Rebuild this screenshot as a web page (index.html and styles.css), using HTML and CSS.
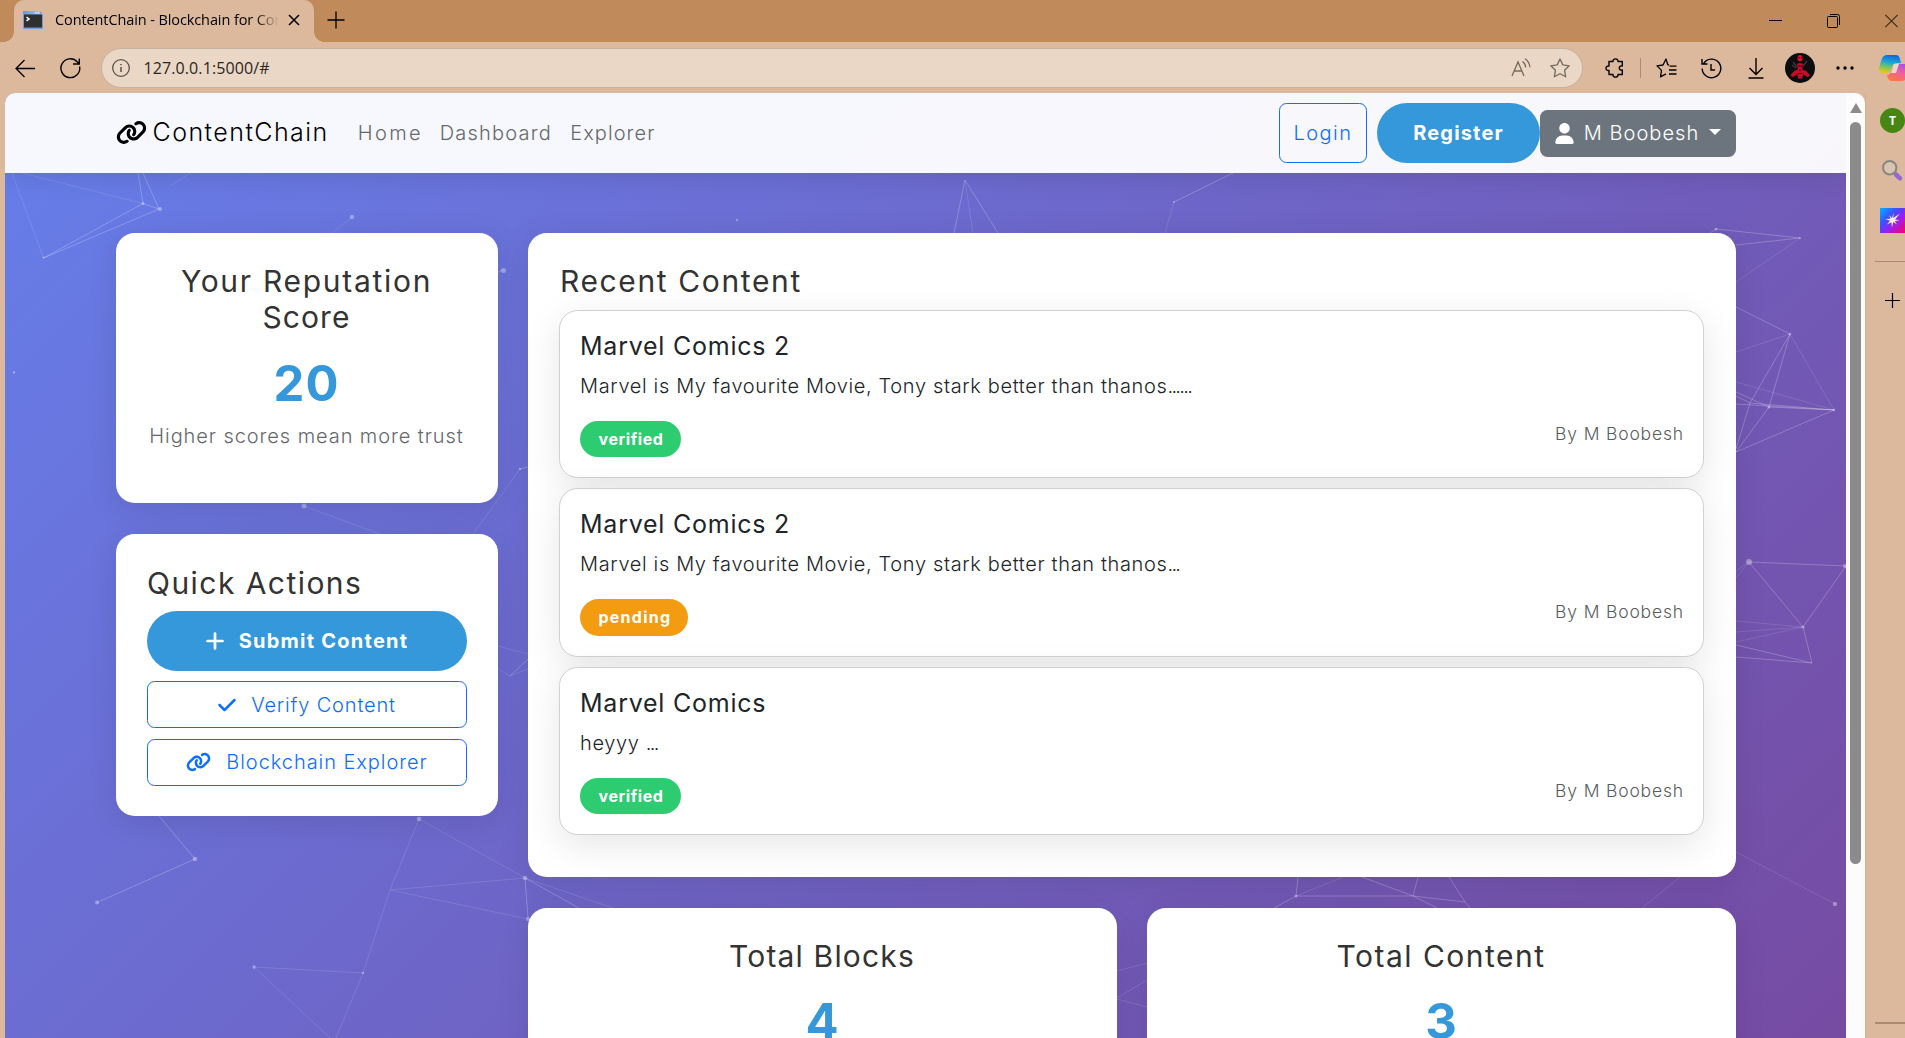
FILE: index.html
```html
<!DOCTYPE html>
<html lang="en">
<head>
<meta charset="utf-8">
<title>ContentChain - Blockchain for Content</title>
<link rel="stylesheet" href="styles.css">
</head>
<body>
<svg class="defs" aria-hidden="true">
  <symbol id="i-link" viewBox="0 0 640 512"><path fill="currentColor" d="M579.8 267.7c56.5-56.5 56.5-148 0-204.5c-50-50-128.8-56.5-186.3-15.4l-1.6 1.1c-14.4 10.3-17.7 30.3-7.4 44.6s30.3 17.7 44.6 7.4l1.6-1.1c32.1-22.9 76-19.3 103.8 8.6c31.5 31.5 31.5 82.5 0 114L422.3 334.8c-31.5 31.5-82.5 31.5-114 0c-27.9-27.9-31.5-71.8-8.6-103.8l1.1-1.6c10.3-14.4 6.9-34.4-7.4-44.6s-34.4-6.9-44.6 7.4l-1.1 1.6C206.5 251.2 213 330 263 380c56.5 56.5 148 56.5 204.5 0L579.8 267.7zM60.2 244.3c-56.5 56.5-56.5 148 0 204.5c50 50 128.8 56.5 186.3 15.4l1.6-1.1c14.4-10.3 17.7-30.3 7.4-44.6s-30.3-17.7-44.6-7.4l-1.6 1.1c-32.1 22.9-76 19.3-103.8-8.6C74 372 74 321 105.5 289.5L217.7 177.2c31.5-31.5 82.5-31.5 114 0c27.9 27.9 31.5 71.8 8.6 103.9l-1.1 1.6c-10.3 14.4-6.9 34.4 7.4 44.6s34.4 6.9 44.6-7.4l1.1-1.6C433.5 260.8 427 182 377 132c-56.5-56.5-148-56.5-204.5 0L60.2 244.3z"/></symbol>
</svg>

<header class="tabstrip">
  <div class="tab">
    <svg class="favicon" viewBox="0 0 20 18"><defs><linearGradient id="tbar" x1="0" y1="0" x2="1" y2="0"><stop offset="0" stop-color="#5b9be8"/><stop offset="1" stop-color="#a9c8ee"/></linearGradient></defs><rect width="20" height="18" rx="1" fill="#6a9de0"/><rect width="20" height="3.5" fill="url(#tbar)"/><path d="M12 1.8h1.5M14.5 1.8H16" stroke="#fff"/><path d="M17 1.8h1.6" stroke="#e04a3a"/><rect x="1" y="3.5" width="18" height="13" fill="#2d2f31"/><path d="M3.5 6.2 6 8 3.5 9.8" fill="none" stroke="#fff" stroke-width="1.5"/></svg>
    <span class="tab-title">ContentChain - Blockchain for Con</span>
    <svg class="tab-close" viewBox="0 0 12 12"><path d="M1 1l10 10M11 1 1 11" stroke="#000" stroke-width="1.5"/></svg>
  </div>
  <svg class="new-tab" viewBox="0 0 18 18"><path d="M9 .5v17M.5 9h17" stroke="#000" stroke-width="1.3"/></svg>
  <div class="window-controls">
    <svg width="13" height="14" viewBox="0 0 13 14"><path d="M0 6.5h13" stroke="#000"/></svg>
    <svg width="13" height="14" viewBox="0 0 13 14" fill="none" stroke="#000"><rect x=".5" y="2.5" width="10" height="11" rx="1"/><path d="M3 .5h7.500a2 2 0 0 1 2 2V11" /></svg>
    <svg width="13" height="14" viewBox="0 0 13 14"><path d="M.3 .8l12.400 12.400M12.700 .8.3 13.200" stroke="#3a2a1c" stroke-width="1.100"/></svg>
  </div>
</header>

<div class="toolbar">
  <svg class="back" viewBox="0 0 20 19" fill="none" stroke="#000" stroke-width="1.300"><path d="M20 9.500H1M9.500 1 1 9.500l8.500 8.500"/></svg>
  <svg class="reload" viewBox="0 0 21 21" fill="none" stroke="#000" stroke-width="1.400"><path d="M19.600 8.500A9.400 9.400 0 1 1 17.400 4L19 5.500M13 6h6.300V.5"/></svg>
  <div class="address">
    <svg class="info" viewBox="0 0 18 18" fill="none" stroke="#5a524a" stroke-width="1.300"><circle cx="9" cy="9" r="8.300"/><path d="M9 8v5M9 5v1.300" stroke-width="1.500"/></svg>
    <span class="url">127.0.0.1:5000/#</span>
    <svg class="read" viewBox="0 0 20 20" fill="none" stroke="#75695f" stroke-width="1.300"><path d="M1 18 7 4l6 14M3 13h8M11.500 3.500q3 2 3.300 6M14 .8q4.500 3 5 8.500"/></svg>
    <svg class="star" viewBox="0 0 20 20" fill="none" stroke="#75695f" stroke-width="1.300" stroke-linejoin="round"><path d="M10 1l2.800 5.900 6.400.9-4.600 4.500 1.100 6.500L10 15.700l-5.700 3.100 1.100-6.500L.8 7.800l6.400-.9z"/></svg>
  </div>
  <svg class="puzzle" viewBox="0 0 20 20" fill="none" stroke="#000" stroke-width="1.400"><path d="M4 3.500h4C7.500 0 13.500 0 13 3.500h4.300V8c-4-1-4 5 0 4v4.500H13c.5 3.500-5.500 3.500-5 0H4V12.500C0 13 0 7.500 4 8z" stroke-linejoin="round"/></svg>
  <span class="divider"></span>
  <svg class="favs" viewBox="0 0 21 20" fill="none" stroke="#000" stroke-width="1.300" stroke-linejoin="round"><path d="M13 7.200 11.800 6.700 10 1 7 7l-6 .9 4.500 4.500-1 6.500 5.500-3M13.500 8.200H20.500M13 12H20.500M13 16H20.500"/></svg>
  <svg class="history" viewBox="0 0 21 21" fill="none" stroke="#000" stroke-width="1.400"><path d="M2.600 5.500A9.300 9.300 0 1 1 1.200 10.500M1 1v5h5.500M10 6v6h4"/></svg>
  <svg class="download" viewBox="0 0 16 21" fill="none" stroke="#000" stroke-width="1.400"><path d="M8 0v16M1.500 10 8 16.500 14.500 10M.5 20h15"/></svg>
  <svg class="avatar" viewBox="0 0 30 30"><circle cx="15" cy="15" r="15" fill="#0c0d0e"/><path d="M8 9l4 5M22 8l-4 5M7 12l4 3" stroke="#34363a" stroke-width="1.500"/><ellipse cx="15" cy="5.300" rx="2.500" ry="3.200" fill="#e0102a"/><path d="M12 11q3-2 6 0l-.8 5.500 4 1.500 3.500 4q0 2-2.500 2l-4-3-1 4.500h-4l-1-4.500-4 3q-2.500 0-2.500-2l3.500-4 3.500-1.500z" fill="#cc0a28"/><path d="M13 4.800h1.300M15.800 4.800H17M12.500 13h5M14 17h2M13 20.500h4" stroke="#2c0610" stroke-width="1.100"/></svg>
  <svg class="more" viewBox="0 0 18 4"><circle cx="2" cy="2" r="1.700"/><circle cx="9" cy="2" r="1.700"/><circle cx="16" cy="2" r="1.700"/></svg>
  <svg class="copilot" viewBox="0 0 30 26"><defs><linearGradient id="ca" x1=".5" y1="0" x2=".3" y2="1"><stop offset="0" stop-color="#1268d8"/><stop offset=".35" stop-color="#18a0dc"/><stop offset=".65" stop-color="#6cc56a"/><stop offset="1" stop-color="#f6c50e"/></linearGradient><linearGradient id="cb" x1=".8" y1="0" x2=".3" y2="1"><stop offset="0" stop-color="#a84ce8"/><stop offset=".5" stop-color="#f2609a"/><stop offset="1" stop-color="#fa7a3c"/></linearGradient></defs><path d="M8 0h9q3 0 4 4l1 4h-4q-4 0-5.500 5L11.500 16q-1 2-4 2H4q-4 0-4-4Q1 8 3 3.500 4.500 0 8 0z" fill="url(#ca)"/><path d="M19 9h7q4 0 4 4-1 7-3 11-1.500 2-5 2h-9q-4 0-5-6 3 0 4.500-4l2-5q1-2 2.500-2z" fill="url(#cb)"/><path d="M15 9h5l-3 9h-5z" fill="#ead8c8"/></svg>
</div>

<div class="workspace">
  <div class="page">
    <svg class="particles" viewBox="5 93 1841 945" aria-hidden="true">
      <g class="faint"><path d="M22 173 143 203.500M43.500 258 12 173M170 186l20-13M304 506l76 28M473 534l47-65M419 819l106 59-135 12 138 29M525 878l88 30M363 973 254 967l76 71M419 819 390 890 363 973 336 1038M973 233 965 180M1174 202l-9 31M1790 334l44 76M1736 382l98 28M1736 352l54-18M1800 238l-64 44M1736 852l99 52M1680 877l-38 31M1296 896l47-19M1117 971l30-8M1117 998l30-18M1117 999l30 8M1803 627l-67-6M1803 627l-67 5M1803 627l-67 15M1749 562l-13 9M1749 562l-13 16M498 646l30 8M332 233l20-16M498 669l12 7 18-7"/></g>
      <g class="clear"><path d="M143 203.500 43.500 258 159 209M143 203.500 138 173M159 209l-16-36M159 816l36 43-98 43.500M525 878l3 40M525 878l54 30M510 676l18-17M520 469l8-2M498 272l5-2M954 233l11-53 33 53M1174 202l59-29M1710 233l6-4 84 9-64 7M1736 307l54 27-40 69-14 46M1790 334l-21 73-33 45 98-42-84-7-14-7M1736 392l33 15 65 3M1736 404l98 6M1749 562l97 4-43 61-54-65M1803 627l9 36-76-18M1812 663l-76-6M1298 877l-2 19-22 12M1296 896h117l5-19M1362 877l51 19 52 6-16-25M1465 902l5 6M1413 896l24 12M143 203.500l16 5.500"/></g>
      <g class="dots"><circle cx="143" cy="203.500" r="1.500"/><circle cx="160" cy="209" r="2"/><circle cx="43.500" cy="257.500" r="1"/><circle cx="352" cy="217" r="2.200"/><circle cx="503.500" cy="270.500" r="2.500"/><circle cx="304" cy="506" r="2.500"/><circle cx="520" cy="469" r="1.200"/><circle cx="14" cy="372.500" r="1.200"/><circle cx="195" cy="859" r="2.300"/><circle cx="97" cy="902.500" r="2"/><circle cx="419" cy="819" r="2.300"/><circle cx="525" cy="878" r="2.300"/><circle cx="528" cy="919" r="2"/><circle cx="254" cy="967" r="1.700"/><circle cx="363" cy="973" r="1.200"/><circle cx="737" cy="220" r="1.200"/><circle cx="1174" cy="202" r="1"/><circle cx="1716" cy="229" r="1.500"/><circle cx="1800" cy="238" r="1"/><circle cx="1790" cy="334" r="1.300"/><circle cx="1769" cy="407" r="1.500"/><circle cx="1834" cy="410" r="1.200"/><circle cx="1749" cy="562" r="3"/><circle cx="1845" cy="566" r="2"/><circle cx="1803" cy="627" r="1.500"/><circle cx="1835" cy="904" r="2.300"/><circle cx="1296" cy="896" r="1.500"/></g>
    </svg>

    <nav class="navbar">
      <a class="brand"><svg class="brand-icon"><use href="#i-link"/></svg><span>ContentChain</span></a>
      <div class="nav-links"><a class="home">Home</a><a class="dash">Dashboard</a><a class="expl">Explorer</a></div>
      <div class="nav-actions">
        <a class="btn outline login">Login</a>
        <a class="btn primary register">Register</a>
        <a class="btn user"><svg class="user-icon" viewBox="0 0 448 512"><path fill="#fff" d="M224 256c70.700 0 128-57.300 128-128S294.700 0 224 0 96 57.300 96 128s57.300 128 128 128zM274.700 304H173.300C77.600 304 0 381.600 0 477.300 0 496.500 15.500 512 34.700 512h378.700c19.100 0 34.600-15.500 34.600-34.700C448 381.600 370.400 304 274.700 304z"/></svg><span>M Boobesh</span><i class="caret"></i></a>
      </div>
    </nav>

    <main class="dashboard">
      <aside class="side">
        <section class="card score-card">
          <h4><span class="t-your">Your Reputation</span> <span class="t-score">Score</span></h4>
          <div class="figure">20</div>
          <p class="hint">Higher scores mean more trust</p>
        </section>
        <section class="card actions">
          <h4 class="t-quick">Quick Actions</h4>
          <a class="btn primary submit"><svg width="18" height="20" viewBox="0 0 18 20"><path d="M9 2.500v15M1.500 10h15" stroke="#fff" stroke-width="2.700" stroke-linecap="round"/></svg><span>Submit Content</span></a>
          <a class="btn outline verify"><svg width="18" height="20" viewBox="0 0 448 512"><path fill="currentColor" d="M438.600 105.400c12.500 12.500 12.500 32.800 0 45.300l-256 256c-12.500 12.500-32.800 12.500-45.300 0l-128-128c-12.500-12.500-12.500-32.800 0-45.300s32.800-12.500 45.300 0L160 338.700 393.400 105.400c12.500-12.500 32.800-12.500 45.300 0z"/></svg><span>Verify Content</span></a>
          <a class="btn outline chain"><svg width="25" height="20"><use href="#i-link"/></svg><span>Blockchain Explorer</span></a>
        </section>
      </aside>
      <div class="content">
        <section class="card recent">
          <h4 class="t-recent">Recent Content</h4>
          <article class="item">
            <h5>Marvel Comics 2</h5>
            <p>Marvel is My favourite Movie, Tony stark better than thanos<span class="ellipsis">......</span></p>
            <div class="meta"><span class="badge verified">verified</span><small>By M Boobesh</small></div>
          </article>
          <article class="item">
            <h5>Marvel Comics 2</h5>
            <p>Marvel is My favourite Movie, Tony stark better than thanos<span class="ellipsis">...</span></p>
            <div class="meta"><span class="badge pending">pending</span><small>By M Boobesh</small></div>
          </article>
          <article class="item">
            <h5>Marvel Comics</h5>
            <p>heyyy <span class="ellipsis">...</span></p>
            <div class="meta"><span class="badge verified">verified</span><small>By M Boobesh</small></div>
          </article>
        </section>
        <div class="stats">
          <section class="card stat"><h4 class="t-blocks">Total Blocks</h4><div class="figure">4</div></section>
          <section class="card stat"><h4 class="t-total">Total Content</h4><div class="figure">3</div></section>
        </div>
      </div>
    </main>
  </div>
  <div class="scrollbar"><i class="arrow"></i><i class="thumb"></i></div>
  <aside class="edge-bar">
    <span class="profile">T</span>
    <svg class="search" viewBox="0 0 20 20"><path d="M14 14.500 18 18.300" stroke="#9468d4" stroke-width="4.500" stroke-linecap="round"/><circle cx="7.700" cy="7.700" r="6.700" fill="#d9c4b2" stroke="#8a8580" stroke-width="2"/></svg>
    <svg class="designer" viewBox="0 0 25 25"><defs><linearGradient id="dg" x1="0" y1="0" x2="1" y2="1"><stop offset="0" stop-color="#00b4ff"/><stop offset=".35" stop-color="#3a50ff"/><stop offset=".6" stop-color="#9a20f0"/><stop offset="1" stop-color="#ff0060"/></linearGradient></defs><rect width="25" height="25" fill="url(#dg)"/><path d="M13.500 4.500l-.3 5.500L20 5.500l-5 6 4.500.8-4.700.9 2.200 3.300-3.700-2.500L12 19.500l-.7-5.200L7 16.500l3-3.700-5-1.800 5.500-.3L9 7l3 3z" fill="#f4eee6"/></svg>
    <hr>
    <svg class="add" viewBox="0 0 15 15"><path d="M7.500 0v15M0 7.500h15" stroke="#000" stroke-width="1.200"/></svg>
    <hr class="last">
  </aside>
</div>
</body>
</html>
```
FILE: styles.css
```css
* { box-sizing: border-box; }
body {
  margin: 0;
  width: 1905px;
  height: 1038px;
  overflow: hidden;
  display: flex;
  flex-direction: column;
  background: #dcb99d;
  font-family: "Inter", sans-serif;
  font-size: 20px;
  font-weight: 300;
  line-height: 30px;
}
svg { display: block; flex: none; overflow: visible; }
h4, h5, p { margin: 0; }
.defs { position: absolute; width: 0; height: 0; }

/* Tab strip */
.tabstrip {
  flex: none;
  height: 42px;
  background: #c18a5a;
  display: flex;
  align-items: center;
  padding-left: 14px;
}
.tab {
  position: relative;
  width: 300px;
  height: 42px;
  padding: 0 14px 2px 9px;
  background: #dcb99d;
  border-radius: 10px 10px 0 0;
  display: flex;
  align-items: center;
}
.tab::before, .tab::after {
  content: "";
  position: absolute;
  bottom: 0;
  width: 10px;
  height: 10px;
}
.tab::before { left: -10px; background: radial-gradient(circle at 0 0, transparent 9.500px, #dcb99d 10px); }
.tab::after { right: -10px; background: radial-gradient(circle at 100% 0, transparent 9.500px, #dcb99d 10px); }
.favicon { width: 20px; height: 18px; }
.tab-title {
  margin-left: 12px;
  width: 224px;
  overflow: hidden;
  white-space: nowrap;
  font: 400 14.500px/20px "Open Sans", sans-serif;
  letter-spacing: -.1px;
  color: #000;
  -webkit-mask-image: linear-gradient(90deg, #000 200px, transparent 224px);
  mask-image: linear-gradient(90deg, #000 200px, transparent 224px);
}
.tab-close { width: 12px; height: 12px; margin-left: 10px; }
.new-tab { width: 18px; height: 18px; margin: 0 0 3px 13px; }
.window-controls { margin-left: auto; display: flex; gap: 45px; padding-right: 7px; }

/* Toolbar */
.toolbar { flex: none; height: 51px; display: flex; align-items: center; padding: 1px 0 0 15px; }
.toolbar > * { flex: none; }
.back { width: 20px; height: 19px; }
.reload { width: 21px; height: 21px; margin-left: 24.500px; }
.address {
  width: 1482px;
  height: 40px;
  margin-left: 20px;
  padding: 0 12px 0 10px;
  border: 1px solid #c5b2a1;
  border-radius: 20px;
  background: #ead7c6;
  display: flex;
  align-items: center;
}
.info { width: 18px; height: 18px; }
.url { margin-left: 14px; margin-right: auto; font: 400 16px/24px "Open Sans", sans-serif; letter-spacing: .1px; color: #2b2622; }
.read { width: 20px; height: 20px; margin-right: 19px; }
.star { width: 20px; height: 20px; }
.puzzle { width: 20px; height: 20px; margin-left: 22px; }
.divider { width: 1px; height: 20px; margin-left: 15px; background: #a98d77; }
.favs { width: 21px; height: 20px; margin-left: 15px; }
.history { width: 21px; height: 21px; margin-left: 24px; }
.download { width: 16px; height: 21px; margin-left: 26.500px; }
.avatar { width: 30px; height: 30px; margin-left: 21px; }
.more { width: 18px; height: 4px; margin-left: 21px; }
.copilot { width: 30px; height: 26px; margin-left: 25px; }

/* Page area */
.workspace { flex: 1; min-height: 0; display: flex; padding-left: 5px; }
.page {
  position: relative;
  width: 1841px;
  height: 945px;
  overflow: hidden;
  border-top-left-radius: 10px;
  background: linear-gradient(135deg, #667eea 0%, #764ba2 100%);
}
.particles { position: absolute; inset: 0; width: 1841px; height: 945px; fill: none; stroke: #fff; stroke-width: 1; }
.particles .faint { opacity: .12; }
.particles .clear { opacity: .23; }
.particles .dots { fill: #fff; stroke: none; opacity: .34; }

.navbar {
  position: relative;
  z-index: 1;
  height: 80px;
  padding: 0 110px 0 111px;
  background: rgba(255, 255, 255, .95);
  box-shadow: 0 2px 25px rgba(0, 0, 0, .12);
  display: flex;
  align-items: center;
}
.brand { display: flex; align-items: center; gap: 5.500px; margin-bottom: 2px; font-size: 25px; letter-spacing: 1.450px; color: #000; }
.brand-icon { width: 31px; height: 25px; }
.nav-links { display: flex; color: #66686b; padding-left: 29px; }
.home { width: 82px; letter-spacing: 2.400px; }
.dash { width: 130.500px; letter-spacing: 1.200px; }
.expl { letter-spacing: 1.050px; }
.nav-actions { margin-left: auto; display: flex; align-items: center; }

.btn { display: flex; align-items: center; justify-content: center; border: 1.250px solid transparent; border-radius: 7.500px; }
.outline { border-color: #0d6efd; color: #0d6efd; }
.primary { background: #3498db; border: 0; border-radius: 31.250px; color: #fff; font-weight: 700; }
.login { width: 88px; height: 60px; margin-right: 10px; letter-spacing: 1.440px; }
.register { width: 163px; height: 60px; letter-spacing: 1.160px; }
.user { width: 196px; height: 47px; background: #6c757d; color: #fff; letter-spacing: 1.040px; }
.user-icon { width: 19px; height: 21px; margin-right: 10px; }
.caret { margin: -3px 0 0 10px; border: 6px solid transparent; border-top-color: #fff; border-bottom: 0; }

.dashboard { position: relative; display: flex; gap: 30px; padding: 60px 110px 0 111px; }
.side { width: 382px; display: flex; flex-direction: column; gap: 30.500px; }
.content { flex: 1; display: flex; flex-direction: column; gap: 31px; }
.card { background: #fff; border-radius: 18.750px; box-shadow: 0 6px 30px rgba(0, 0, 0, .1); padding: 30px 32px 0 31px; }
h4 { font-size: 30px; line-height: 36px; font-weight: 400; color: #333; margin-bottom: 10.500px; }
.figure { font-size: 49px; line-height: 75px; font-weight: 700; color: #3498db; text-align: center; }

.score-card { height: 270px; text-align: center; }
.score-card h4 span { display: block; }
.t-your { letter-spacing: 1.710px; }
.t-score { letter-spacing: 1.110px; }
.score-card .figure { letter-spacing: 1px; }
.hint { letter-spacing: .920px; color: #66696c; white-space: nowrap; }

.actions { height: 282px; padding-right: 31px; padding-top: 31px; }
.t-quick { letter-spacing: 1.450px; }
.actions .btn { margin-bottom: 10.500px; gap: 15px; white-space: nowrap; }
.submit { height: 59.500px; letter-spacing: 1.250px; }
.verify { height: 47px; letter-spacing: .830px; }
.chain { height: 47px; letter-spacing: .940px; }

.recent { height: 643.500px; }
.t-recent { letter-spacing: 1.620px; padding-left: 1px; }
.item {
  height: 168.500px;
  margin-bottom: 10px;
  padding: 20px;
  background: #fff;
  border: 1.250px solid #d0d0d0;
  border-radius: 18.750px;
  box-shadow: 0 10px 37px rgba(0, 0, 0, .1);
}
h5 { margin-bottom: 10px; font-size: 25px; line-height: 30px; font-weight: 400; letter-spacing: .760px; color: #212529; }
.item p { letter-spacing: .640px; color: #212529; }
.item p .ellipsis { letter-spacing: -1.700px; }
.meta { margin-top: 20px; display: flex; justify-content: space-between; align-items: flex-start; }
.badge { height: 36.500px; padding-left: 18.500px; border-radius: 18.750px; color: #fff; font-size: 16px; line-height: 36px; font-weight: 700; }
.verified { width: 101px; background: #2ecc71; letter-spacing: .600px; }
.pending { width: 108px; background: #f39c12; letter-spacing: 1.250px; }
small { font-size: 17.500px; line-height: 25px; letter-spacing: .840px; margin-right: -1px; color: #595d61; }

.stats { display: flex; gap: 30px; }
.stat { flex: 1; height: 200px; text-align: center; }
.t-blocks { letter-spacing: 1.160px; }
.t-total { letter-spacing: 1.490px; }

/* Scrollbar and side bar */
.scrollbar { width: 19px; background: #fcfcfc; border-top-right-radius: 10px; display: flex; flex-direction: column; align-items: center; padding-top: 10px; }
.arrow { border: 6.500px solid transparent; border-bottom: 10px solid #8b8b8b; border-top: 0; }
.thumb { width: 11px; height: 742px; margin-top: 9px; border-radius: 5.500px; background: #8b8b8b; }
.edge-bar { width: 40px; border-left: 1px solid #cfae93; display: flex; flex-direction: column; padding: 15px 0 0 14px; overflow: hidden; }
.profile { flex: none; width: 25px; height: 25px; border-radius: 50%; background: #458712; color: #fff; font: 700 12px/25px "Open Sans", sans-serif; text-align: center; }
.search { width: 20px; height: 20px; margin: 27px 0 0 2px; }
.designer { width: 25px; height: 25px; margin-top: 28px; }
.edge-bar hr { width: 30px; height: 1px; margin: 28px 0 0 -5px; border: 0; background: #a98b74; flex: none; }
.add { width: 15px; height: 15px; margin: 31px 0 0 5px; }
.edge-bar hr.last { height: 2px; margin-top: 714px; }
```
